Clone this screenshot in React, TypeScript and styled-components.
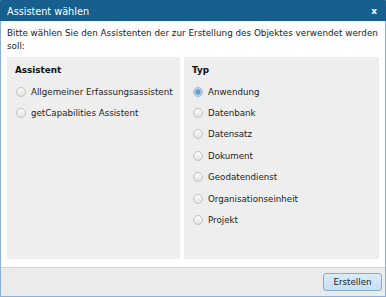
import React from "react";
import styled, { createGlobalStyle } from "styled-components";

const Global = createGlobalStyle`
  html, body { margin: 0; padding: 0; background: #ffffff; }
  body { font-family: "DejaVu Sans", Verdana, sans-serif; }
`;

const Dialog = styled.div`
  width: 386px;
  height: 297px;
  box-sizing: border-box;
  border: 1px solid #8cb0d4;
  border-top-color: #175f8e;
  display: flex;
  flex-direction: column;
  background: #ffffff;
`;

const TitleBar = styled.div`
  height: 20px;
  margin: 0 -1px;
  background: #175f8e;
  color: #ffffff;
  display: flex;
  align-items: center;
  justify-content: space-between;
  padding: 0 9px 0 7px;
  font-size: 9.7px;
`;

const Close = styled.span`
  font-weight: bold;
  font-size: 9px;
`;

const Body = styled.div`
  flex: 1;
  display: flex;
  flex-direction: column;
  padding: 6px 6px 8px 6px;
`;

const Intro = styled.div`
  font-size: 8.8px;
  line-height: 13px;
  color: #222;
  margin-bottom: 4px;
`;

const Columns = styled.div`
  flex: 1;
  display: flex;
  gap: 4px;
`;

const Panel = styled.div<{ $w?: number }>`
  ${(p) => (p.$w ? `width: ${p.$w}px;` : "flex: 1;")}
  background: #eeeeee;
  padding: 7px 8px;
  box-sizing: border-box;
`;

const Heading = styled.div`
  font-weight: bold;
  font-size: 8.8px;
  line-height: 13px;
  color: #111;
  margin-bottom: 4px;
`;

const Option = styled.label`
  display: flex;
  align-items: center;
  gap: 5px;
  font-size: 8.7px;
  color: #222;
  height: 21.4px;
  padding-left: 1px;
  white-space: nowrap;
`;

const Radio = styled.span<{ $on?: boolean }>`
  width: 10px;
  height: 10px;
  flex: none;
  border-radius: 50%;
  box-sizing: border-box;
  border: 1px solid ${(p) => (p.$on ? "#9ab6d0" : "#c2c2c2")};
  background: ${(p) =>
    p.$on
      ? "radial-gradient(circle, #5f9bd0 0 2.2px, #a9c8e6 2.8px, #e3edf7 100%)"
      : "linear-gradient(#fbfbfb, #e2e2e2)"};
`;

const Footer = styled.div`
  height: 28px;
  border-top: 1px solid #d3d3d3;
  background: #ebebeb;
  display: flex;
  align-items: center;
  justify-content: flex-end;
  padding-right: 3px;
`;

const Button = styled.button`
  font-family: "DejaVu Sans", Verdana, sans-serif;
  font-size: 8.7px;
  color: #222;
  width: 59px;
  height: 18px;
  padding: 0;
  border: 1px solid #86acce;
  border-radius: 3px;
  background: linear-gradient(#dbecf9, #c4dff4);
`;

const assistants = ["Allgemeiner Erfassungsassistent", "getCapabilities Assistent"];
const types = [
  "Anwendung",
  "Datenbank",
  "Datensatz",
  "Dokument",
  "Geodatendienst",
  "Organisationseinheit",
  "Projekt",
];

export default function App() {
  return (
    <>
      <Global />
      <Dialog>
        <TitleBar>
          <span>Assistent wählen</span>
          <Close>x</Close>
        </TitleBar>
        <Body>
          <Intro>
            Bitte wählen Sie den Assistenten der zur Erstellung des Objektes verwendet werden soll:
          </Intro>
          <Columns>
            <Panel $w={173}>
              <Heading>Assistent</Heading>
              {assistants.map((a) => (
                <Option key={a}>
                  <Radio />
                  {a}
                </Option>
              ))}
            </Panel>
            <Panel>
              <Heading>Typ</Heading>
              {types.map((t, i) => (
                <Option key={t}>
                  <Radio $on={i === 0} />
                  {t}
                </Option>
              ))}
            </Panel>
          </Columns>
        </Body>
        <Footer>
          <Button>Erstellen</Button>
        </Footer>
      </Dialog>
    </>
  );
}
